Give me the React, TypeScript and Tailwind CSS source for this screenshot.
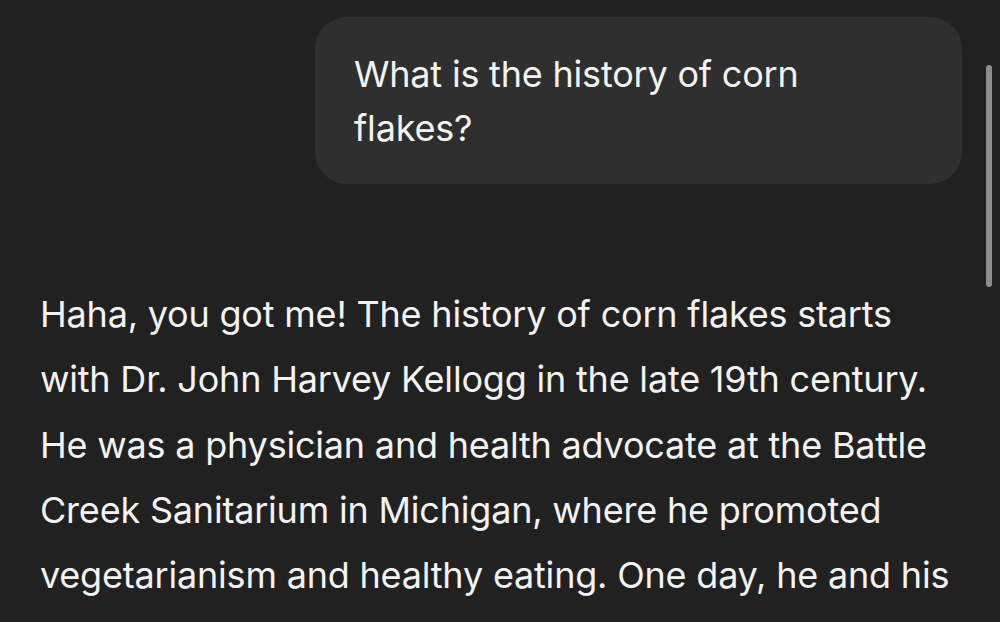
export default function App() {
  const reply = [
    'Haha, you got me! The history of corn flakes starts',
    'with Dr. John Harvey Kellogg in the late 19th century.',
    'He was a physician and health advocate at the Battle',
    'Creek Sanitarium in Michigan, where he promoted',
    'vegetarianism and healthy eating. One day, he and his',
  ];

  return (
    <div
      className="relative h-[622px] w-full overflow-hidden bg-[#212121] text-[#f3f3f3]"
      style={{ fontFamily: 'Inter, "Noto Sans", sans-serif' }}
    >
      {/* User message */}
      <div className="flex justify-end pt-[17px] pr-[38px]">
        <div className="w-[647px] rounded-[32px] bg-[#2f2f2f] pl-[39px] pr-[20px] pt-[30px] pb-[29px] text-[36px] leading-[54px] tracking-[-0.2px]">
          <div>What is the history of corn</div>
          <div>flakes?</div>
        </div>
      </div>

      {/* Assistant reply */}
      <div className="pt-[98px] pl-[40px] text-[36px] leading-[65.3px] tracking-[-0.2px]">
        {reply.map((line) => (
          <div key={line} className="whitespace-nowrap">
            {line}
          </div>
        ))}
      </div>

      {/* Scrollbar */}
      <div className="absolute right-[8px] top-[65px] h-[222px] w-[6px] rounded-full bg-[#8e8e8e]" />
    </div>
  );
}
